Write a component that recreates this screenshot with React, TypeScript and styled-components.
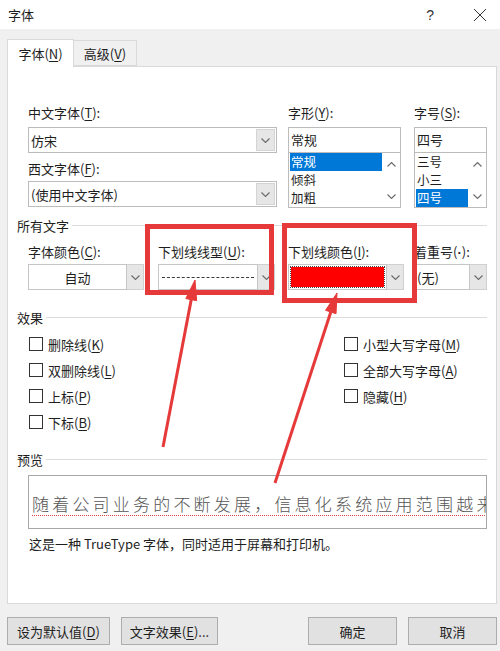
import styled, { createGlobalStyle } from 'styled-components'

const GlobalStyle = createGlobalStyle`
  html, body {
    margin: 0;
    padding: 0;
    background: #fff;
  }
  body {
    font-family: 'Noto Sans CJK SC', 'Microsoft YaHei', sans-serif;
    font-size: 13px;
    color: #1e1e1e;
  }
`

const RED = '#e63a3a'

const Chevron = ({ up = false }: { up?: boolean }) => (
  <svg width="9" height="5" viewBox="0 0 9 5">
    <path
      d={up ? 'M0.5 4.5 L4.5 0.5 L8.5 4.5' : 'M0.5 0.5 L4.5 4.5 L8.5 0.5'}
      stroke="#6a6a6a"
      strokeWidth="1.1"
      fill="none"
    />
  </svg>
)

type ArrowProps = { tip: [number, number]; tail: [number, number] }

const Arrow = ({ tip, tail }: ArrowProps) => {
  const dx = tip[0] - tail[0]
  const dy = tip[1] - tail[1]
  const len = Math.hypot(dx, dy)
  const ux = dx / len
  const uy = dy / len
  const bx = tip[0] - ux * 20
  const by = tip[1] - uy * 20
  const px = -uy * 5.5
  const py = ux * 5.5
  return (
    <g fill={RED} stroke={RED}>
      <line x1={tail[0]} y1={tail[1]} x2={bx} y2={by} strokeWidth="3" />
      <polygon
        points={`${tip[0]},${tip[1]} ${bx + px},${by + py} ${bx - px},${by - py}`}
        strokeWidth="1"
      />
    </g>
  )
}

const App = () => {
  return (
    <Dialog>
      <GlobalStyle />
      <TitleBar>
        <span>字体</span>
        <TitleButtons>
          <HelpMark>?</HelpMark>
          <svg width="14" height="14" viewBox="0 0 14 14">
            <path d="M1 1 L13 13 M13 1 L1 13" stroke="#333" strokeWidth="1" />
          </svg>
        </TitleButtons>
      </TitleBar>

      <Body>
        <TabRow>
          <Tab active><span>字体(<u>N</u>)</span></Tab>
          <Tab active={false}><span>高级(<u>V</u>)</span></Tab>
        </TabRow>

        <Panel>
          <TopRow>
            <Column width={249}>
              <FieldLabel>中文字体(<u>T</u>):</FieldLabel>
              <Combo>
                <ComboText>仿宋</ComboText>
                <DropButton><Chevron /></DropButton>
              </Combo>
              <FieldLabel gap={7}>西文字体(<u>F</u>):</FieldLabel>
              <Combo tight>
                <ComboText>(使用中文字体)</ComboText>
                <DropButton><Chevron /></DropButton>
              </Combo>
            </Column>

            <Column width={113} offset={11}>
              <FieldLabel>字形(<u>Y</u>):</FieldLabel>
              <TextBox>常规</TextBox>
              <ListBox>
                <ListItems>
                  <ListItem selected>常规</ListItem>
                  <ListItem>倾斜</ListItem>
                  <ListItem>加粗</ListItem>
                </ListItems>
                <ScrollArrows>
                  <Chevron up />
                  <Chevron />
                </ScrollArrows>
              </ListBox>
            </Column>

            <Column width={73} offset={13}>
              <FieldLabel>字号(<u>S</u>):</FieldLabel>
              <TextBox>四号</TextBox>
              <ListBox>
                <ListItems>
                  <ListItem>三号</ListItem>
                  <ListItem>小三</ListItem>
                  <ListItem selected>四号</ListItem>
                </ListItems>
                <ScrollArrows>
                  <Chevron up />
                  <Chevron />
                </ScrollArrows>
              </ListBox>
            </Column>
          </TopRow>

          <GroupHeading top={8}>所有文字</GroupHeading>

          <ColorRow>
            <Column width={116}>
              <FieldLabel>字体颜色(<u>C</u>):</FieldLabel>
              <SplitCombo>
                <SplitValue center>自动</SplitValue>
                <SplitButton><Chevron /></SplitButton>
              </SplitCombo>
            </Column>
            <Column width={117} offset={14}>
              <FieldLabel>下划线线型(<u>U</u>):</FieldLabel>
              <SplitCombo>
                <SplitValue><DashLine /></SplitValue>
                <SplitButton><Chevron /></SplitButton>
              </SplitCombo>
            </Column>
            <Column width={116} offset={13}>
              <FieldLabel>下划线颜色(<u>I</u>):</FieldLabel>
              <SplitCombo>
                <SplitValue><Swatch /></SplitValue>
                <SplitButton><Chevron /></SplitButton>
              </SplitCombo>
            </Column>
            <Column width={73} offset={10}>
              <FieldLabel>着重号(<Dot>·</Dot>):</FieldLabel>
              <SplitCombo>
                <SplitValue>(无)</SplitValue>
                <SplitButton><Chevron /></SplitButton>
              </SplitCombo>
            </Column>
          </ColorRow>

          <GroupHeading top={18}>效果</GroupHeading>

          <EffectsGrid>
            <div>
              <CheckRow><CheckBox /><span>删除线(<u>K</u>)</span></CheckRow>
              <CheckRow><CheckBox /><span>双删除线(<u>L</u>)</span></CheckRow>
              <CheckRow><CheckBox /><span>上标(<u>P</u>)</span></CheckRow>
              <CheckRow><CheckBox /><span>下标(<u>B</u>)</span></CheckRow>
            </div>
            <div>
              <CheckRow><CheckBox /><span>小型大写字母(<u>M</u>)</span></CheckRow>
              <CheckRow><CheckBox /><span>全部大写字母(<u>A</u>)</span></CheckRow>
              <CheckRow><CheckBox /><span>隐藏(<u>H</u>)</span></CheckRow>
            </div>
          </EffectsGrid>

          <GroupHeading top={15}>预览</GroupHeading>

          <PreviewBox>
            <PreviewText>随着公司业务的不断发展，信息化系统应用范围越来</PreviewText>
          </PreviewBox>

          <Note>这是一种 TrueType 字体，同时适用于屏幕和打印机。</Note>
        </Panel>

        <Footer>
          <ButtonGroup>
            <Button width={103}><span>设为默认值(<u>D</u>)</span></Button>
            <Button width={97}><span>文字效果(<u>E</u>)...</span></Button>
          </ButtonGroup>
          <ButtonGroup>
            <Button width={89}>确定</Button>
            <Button width={89}>取消</Button>
          </ButtonGroup>
        </Footer>
      </Body>

      <Annotations width="500" height="651" viewBox="0 0 500 651">
        <rect x="147.5" y="226.5" width="124" height="66" fill="none" stroke={RED} strokeWidth="5" />
        <rect x="284.5" y="225.5" width="130" height="75" fill="none" stroke={RED} strokeWidth="5" />
        <Arrow tip={[195, 280]} tail={[163, 447]} />
        <Arrow tip={[337, 293]} tail={[275, 483]} />
      </Annotations>
    </Dialog>
  )
}

const Dialog = styled.div`
  position: relative;
  width: 500px;
  height: 651px;
  overflow: hidden;
  background: #fff;

  u {
    text-decoration: underline;
    text-underline-offset: 2px;
  }
`

const TitleBar = styled.div`
  height: 29px;
  display: flex;
  align-items: center;
  justify-content: space-between;
  padding-left: 8px;
  padding-right: 13px;
  background: #fff;
`

const TitleButtons = styled.div`
  display: flex;
  align-items: center;
  gap: 39px;
`

const HelpMark = styled.span`
  font-family: 'Liberation Sans', sans-serif;
  font-size: 14px;
  color: #333;
`

const Body = styled.div`
  background: #f0f0f0;
  height: 622px;
  padding: 10px 3px 0 7px;
  box-sizing: border-box;
`

const TabRow = styled.div`
  display: flex;
  align-items: flex-end;
  height: 27px;
`

const Tab = styled.div<{ active: boolean }>`
  position: relative;
  z-index: 1;
  box-sizing: border-box;
  height: ${p => (p.active ? '28px' : '26px')};
  margin-bottom: ${p => (p.active ? '-1px' : '0')};
  display: flex;
  align-items: center;
  justify-content: center;
  white-space: nowrap;
  background: ${p => (p.active ? '#fff' : '#f0f0f0')};
  border: 1px solid #d9d9d9;
  border-bottom: ${p => (p.active ? 'none' : '1px solid #d9d9d9')};
  border-left: ${p => (p.active ? '1px solid #d9d9d9' : 'none')};
  width: ${p => (p.active ? '67px' : '63px')};
`

const Panel = styled.div`
  box-sizing: border-box;
  width: 490px;
  height: 538px;
  background: #fff;
  border: 1px solid #d9d9d9;
  padding: 37px 9px 0 9px;
`

const TopRow = styled.div`
  display: flex;
  margin-left: 11px;
`

const Column = styled.div<{ width: number; offset?: number }>`
  display: flex;
  flex-direction: column;
  width: ${p => p.width}px;
  margin-left: ${p => p.offset || 0}px;
  flex-shrink: 0;
`

const FieldLabel = styled.div<{ gap?: number }>`
  height: 18px;
  line-height: 18px;
  margin-top: ${p => p.gap || 0}px;
  margin-bottom: 5px;
  white-space: nowrap;
`

const Dot = styled.span`
  font-family: 'Liberation Sans', sans-serif;
  font-weight: bold;
`

const Combo = styled.div<{ tight?: boolean }>`
  box-sizing: border-box;
  height: 26px;
  border: 1px solid #bcbcbc;
  display: flex;
  align-items: center;
  padding: 0 1px 0 2px;
  margin-top: ${p => (p.tight ? '-2px' : '0')};
`

const ComboText = styled.div`
  flex: 1;
`

const DropButton = styled.div`
  width: 17px;
  height: 20px;
  background: #e6e6e6;
  border: 1px solid #d4d4d4;
  display: flex;
  align-items: center;
  justify-content: center;
`

const TextBox = styled.div`
  box-sizing: border-box;
  height: 25px;
  border: 1px solid #bcbcbc;
  border-bottom: none;
  line-height: 23px;
  padding-left: 2px;
`

const ListBox = styled.div`
  box-sizing: border-box;
  height: 56px;
  border: 1px solid #bcbcbc;
  display: flex;
`

const ListItems = styled.div`
  flex: 1;
  padding: 0 0 0 1px;
`

const ListItem = styled.div<{ selected?: boolean }>`
  height: 18px;
  line-height: 18px;
  font-size: 12.5px;
  padding-left: 1px;
  overflow: hidden;
  background: ${p => (p.selected ? '#0078d7' : 'transparent')};
  color: ${p => (p.selected ? '#fff' : '#1e1e1e')};
`

const ScrollArrows = styled.div`
  width: 18px;
  display: flex;
  flex-direction: column;
  justify-content: space-between;
  align-items: center;
  padding: 9px 0 8px;
`

const GroupHeading = styled.div<{ top: number }>`
  display: flex;
  align-items: center;
  height: 18px;
  margin-top: ${p => p.top}px;
  gap: 3px;

  &::after {
    content: '';
    flex: 1;
    height: 1px;
    background: #dcdcdc;
  }
`

const ColorRow = styled.div`
  display: flex;
  margin: 9px 0 0 11px;

  ${FieldLabel} {
    margin-bottom: 3px;
  }
`

const SplitCombo = styled.div`
  display: flex;
  height: 26px;
`

const SplitValue = styled.div<{ center?: boolean }>`
  flex: 1;
  box-sizing: border-box;
  border: 1px solid #c6c6c6;
  display: flex;
  align-items: center;
  justify-content: ${p => (p.center ? 'center' : 'flex-start')};
  padding: 0 2px;
  overflow: hidden;
`

const SplitButton = styled.div`
  width: 17px;
  box-sizing: border-box;
  background: #e6e6e6;
  border: 1px solid #d0d0d0;
  border-left: none;
  display: flex;
  align-items: center;
  justify-content: center;
`

const DashLine = styled.div`
  flex: 1;
  height: 0;
  border-top: 1px dashed #3a3a3a;
  margin: 0 1px 0 1px;
`

const Swatch = styled.div`
  flex: 1;
  height: 20px;
  background: #ff0000;
  outline: 1px dotted #444;
`

const EffectsGrid = styled.div`
  display: grid;
  grid-template-columns: 315px 1fr;
  margin: 5px 0 0 12px;
`

const CheckRow = styled.div`
  display: flex;
  align-items: center;
  height: 26px;
  gap: 5px;
  white-space: nowrap;
`

const CheckBox = styled.span`
  display: inline-block;
  box-sizing: border-box;
  width: 14px;
  height: 14px;
  border: 1px solid #333;
  background: #fff;
`

const PreviewBox = styled.div`
  box-sizing: border-box;
  height: 54px;
  margin: 7px 0 0 11px;
  border: 1px solid #a8a8a8;
  display: flex;
  align-items: center;
  padding: 2px 0 0 3px;
  overflow: hidden;
`

const PreviewText = styled.div`
  font-size: 17px;
  font-weight: 300;
  letter-spacing: 3.2px;
  color: #555;
  white-space: nowrap;
  text-decoration: underline dotted #e04040;
  text-decoration-thickness: 1px;
  text-underline-offset: 4px;
`

const Note = styled.div`
  height: 18px;
  line-height: 18px;
  margin: 6px 0 0 12px;
`

const Footer = styled.div`
  display: flex;
  justify-content: space-between;
  margin-top: 13px;
`

const ButtonGroup = styled.div`
  display: flex;
  gap: 11px;
`

const Button = styled.div<{ width: number }>`
  box-sizing: border-box;
  width: ${p => p.width}px;
  height: 28px;
  background: #e1e1e1;
  border: 1px solid #adadad;
  display: flex;
  align-items: center;
  justify-content: center;
  white-space: nowrap;
`

const Annotations = styled.svg`
  position: absolute;
  left: 0;
  top: 0;
  pointer-events: none;
`

export default App
